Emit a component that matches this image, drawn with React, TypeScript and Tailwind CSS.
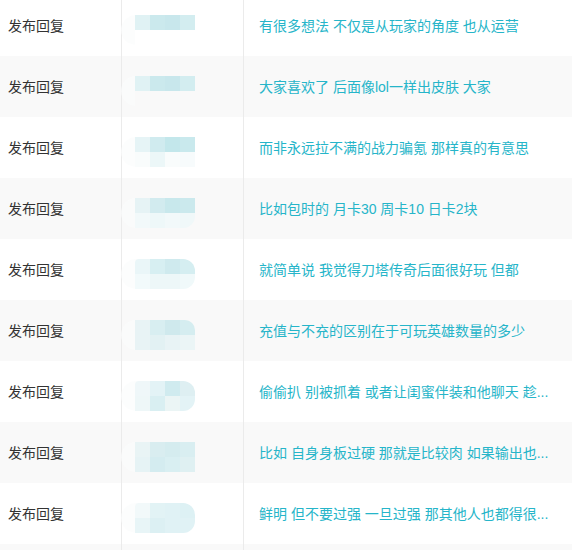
import clsx from 'clsx';

type Row = {
  content: string;
  // mosaic avatar cells: top row then bottom row, 4 each
  top: string[];
  bottom: string[];
  shape?: 'pill' | 'notch' | 'flat';
};

const rows: Row[] = [
  {
    content: '有很多想法 不仅是从玩家的角度 也从运营',
    top: ['#e0f2f4', '#cbe9ed', '#c8e7ec', '#d3edf0'],
    bottom: ['#ffffff', '#ffffff', '#ffffff', '#ffffff'],
  },
  {
    content: '大家喜欢了 后面像lol一样出皮肤 大家',
    top: ['#e0f2f4', '#cbe9ed', '#c8e7ec', '#d3edf0'],
    bottom: ['#f9f9f9', '#f9f9f9', '#f9f9f9', '#f9f9f9'],
  },
  {
    content: '而非永远拉不满的战力骗氪 那样真的有意思',
    top: ['#e6f4f6', '#d0ebef', '#c3e7eb', '#c9e9ed'],
    bottom: ['#f9fcfc', '#ecf7f8', '#f9fcfc', '#f7fbfc'],
  },
  {
    content: '比如包时的 月卡30 周卡10 日卡2块',
    top: ['#e6f3f5', '#d2ebef', '#c8e8ec', '#cbe9ed'],
    bottom: ['#f2f9fa', '#eef8f9', '#f2f9fa', '#f0f8f9'],
    shape: 'flat',
  },
  {
    content: '就简单说 我觉得刀塔传奇后面很好玩 但都',
    top: ['#eaf6f8', '#d7eff2', '#cfeaee', '#d5eef1'],
    bottom: ['#f2fafb', '#edf7f8', '#edf7f8', '#f0f9fa'],
    shape: 'pill',
  },
  {
    content: '充值与不充的区别在于可玩英雄数量的多少',
    top: ['#e8f3f5', '#d8eef1', '#cfe9ed', '#d5edf0'],
    bottom: ['#e8f3f5', '#e2f1f3', '#e8f3f5', '#ebf5f6'],
    shape: 'notch',
  },
  {
    content: '偷偷扒 别被抓着 或者让闺蜜伴装和他聊天 趁...',
    top: ['#eff7f9', '#e3f3f6', '#d0ebef', '#deeff2'],
    bottom: ['#eef7f8', '#d9eff2', '#ebf5f5', '#e3f3f6'],
    shape: 'pill',
  },
  {
    content: '比如 自身身板过硬 那就是比较肉 如果输出也...',
    top: ['#e9f4f5', '#d9edf0', '#d5ecef', '#d9eef1'],
    bottom: ['#e6f3f5', '#d4ecf0', '#d9eff2', '#dff0f2'],
  },
  {
    content: '鲜明 但不要过强 一旦过强 那其他人也都得很...',
    top: ['#f2f9fa', '#e2f3f5', '#e0f2f5', '#ddf1f4'],
    bottom: ['#e8f5f7', '#dcf0f3', '#e0f2f5', '#e0f2f5'],
    shape: 'pill',
  },
  {
    content: '',
    top: [],
    bottom: [],
  },
];

function Mosaic({ row }: { row: Row }) {
  return (
    <div className="relative flex items-center">
      <div className="absolute -left-[14px] top-0 h-[30px] w-[20px] rounded-l-full bg-[#fbfcfc] opacity-70" />
      <div
        className={clsx(
          'relative grid grid-cols-[repeat(4,15px)] grid-rows-[15px_15px] overflow-hidden',
          row.shape === 'pill' && 'rounded-r-[12px] rounded-tl-[4px]',
          row.shape === 'notch' && 'rounded-tr-[10px]',
          row.shape === 'flat' && 'rounded-br-[12px]'
        )}
      >
        {[...row.top, ...row.bottom].map((c, i) => (
          <div key={i} style={{ backgroundColor: c }} />
        ))}
      </div>
    </div>
  );
}

export default function App() {
  return (
    <div className="h-[550px] w-[572px] overflow-hidden bg-white font-['Liberation_Sans','Noto_Sans_CJK_SC',sans-serif] text-[14px]">
      <div className="-mt-[5px]">
        {rows.map((row, i) => (
          <div
            key={i}
            className={clsx('flex h-[61px] items-stretch', i % 2 === 1 ? 'bg-[#f9f9f9]' : 'bg-white')}
          >
            <div className="flex w-[122px] shrink-0 items-center border-r border-[#ebebeb] pl-2 pt-[2px] text-[#333333]">
              {row.content && '发布回复'}
            </div>
            <div className="flex w-[122px] shrink-0 items-start border-r border-[#ebebeb] pl-[13px] pt-[20px]">
              {row.content && <Mosaic row={row} />}
            </div>
            <div className="flex min-w-0 flex-1 items-center pl-[15px] pt-[1px]">
              <span className="whitespace-nowrap text-[#26b5c9]">{row.content}</span>
            </div>
          </div>
        ))}
      </div>
    </div>
  );
}
